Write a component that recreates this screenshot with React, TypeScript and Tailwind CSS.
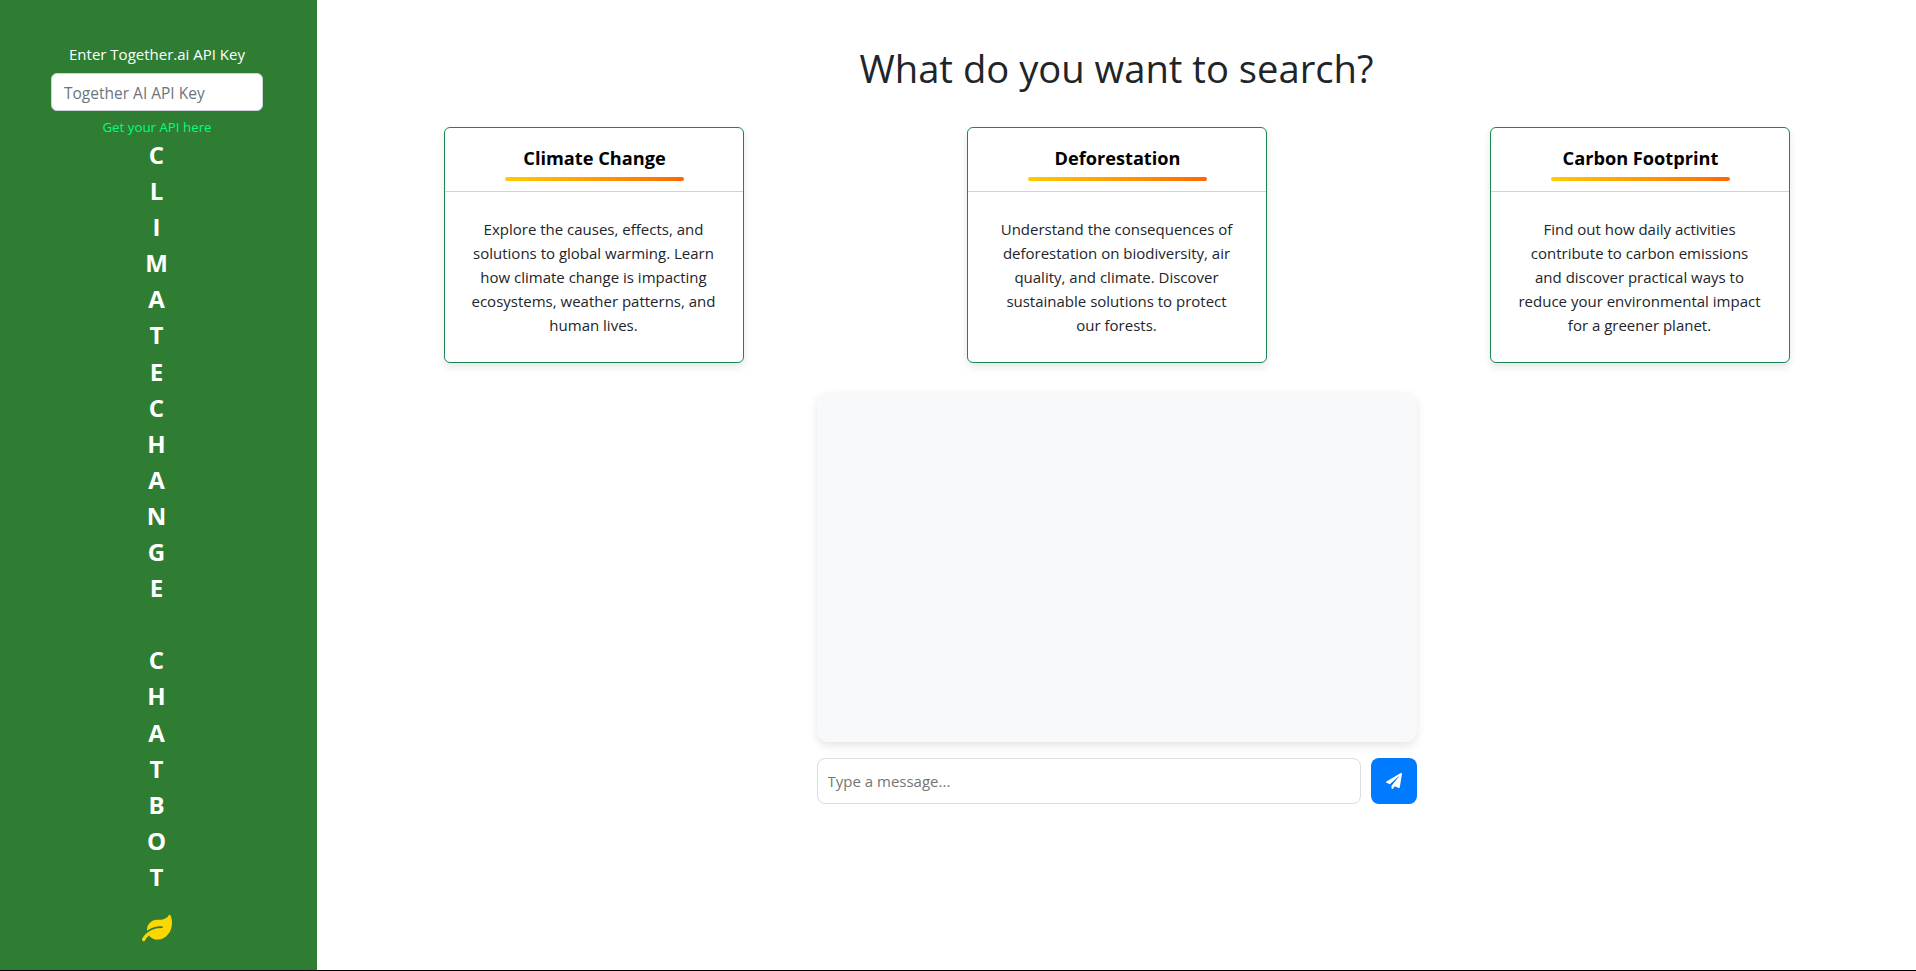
import { FaLeaf, FaPaperPlane } from 'react-icons/fa';

const sidebarTitle = 'CLIMATECHANGE CHATBOT'.split('');

const cards = [
  {
    title: 'Climate Change',
    text: 'Explore the causes, effects, and solutions to global warming. Learn how climate change is impacting ecosystems, weather patterns, and human lives.',
  },
  {
    title: 'Deforestation',
    text: 'Understand the consequences of deforestation on biodiversity, air quality, and climate. Discover sustainable solutions to protect our forests.',
  },
  {
    title: 'Carbon Footprint',
    text: 'Find out how daily activities contribute to carbon emissions and discover practical ways to reduce your environmental impact for a greener planet.',
  },
];

function Sidebar() {
  return (
    <aside className="flex w-[317px] shrink-0 flex-col items-center bg-[#2e7d32] pt-[43px] pr-[3px] text-white">
      <label className="shrink-0 text-[15px] leading-[22px]">Enter Together.ai API Key</label>
      <input
        type="text"
        placeholder="Together AI API Key"
        className="mt-[8px] h-[38px] w-[212px] shrink-0 rounded-[6px] border border-[#ced4da] bg-white px-[12px] pt-[1px] text-[15.5px] text-[#212529] placeholder:text-[#6c757d] focus:outline-none"
      />
      <a className="mt-[7px] shrink-0 text-[13.3px] leading-[18px] text-[#00ff7f]">Get your API here</a>
      <div className="mt-[1px] mr-[1px] flex shrink-0 flex-col items-center">
        {sidebarTitle.map((letter, i) => (
          <span key={i} className="h-[36.1px] text-[24px] leading-[36px] font-bold">
            {letter === ' ' ? '\u00a0' : letter}
          </span>
        ))}
      </div>
      <FaLeaf className="mt-[18.5px] h-[30px] w-[30px] shrink-0 text-[#ffd700]" />
    </aside>
  );
}

function TopicCard({ title, text }: { title: string; text: string }) {
  return (
    <div className="flex h-[236px] w-[300px] flex-col rounded-[6px] border border-[#198754] bg-white shadow-[0_4px_8px_rgba(0,0,0,0.1)]">
      <div className="flex h-[64px] flex-col items-center border-b border-[#d3d3d3] pt-[19px] pl-[2px]">
        <h3 className="text-[18.2px] leading-[22px] font-bold text-black">{title}</h3>
        <div className="mt-[8px] h-[4px] w-[179px] rounded-[2px] bg-gradient-to-r from-[#ffcc00] to-[#ff6600]" />
      </div>
      <p className="px-[27px] pt-[25px] text-center text-[15px] leading-[24px] text-[#212529]">{text}</p>
    </div>
  );
}

export default function App() {
  return (
    <div
      className="flex h-[971px] w-full overflow-hidden border-b border-black bg-white"
      style={{ fontFamily: '"Open Sans", "Noto Sans", sans-serif' }}
    >
      <Sidebar />
      <main className="flex flex-1 flex-col items-center pt-[42px]">
        <h1 className="text-[38.2px] leading-[52px] text-[#212529]">What do you want to search?</h1>
        <div className="mt-[33px] flex w-[1346px] justify-between">
          {cards.map((card) => (
            <TopicCard key={card.title} {...card} />
          ))}
        </div>
        <div className="mt-[29px] h-[350px] w-[600px] rounded-[12px] bg-[#f8f9fa] shadow-[0_4px_10px_rgba(0,0,0,0.1)]" />
        <div className="mt-[16px] flex w-[600px] gap-[10px]">
          <input
            type="text"
            placeholder="Type a message..."
            className="h-[46px] flex-1 rounded-[8px] border border-[#dddddd] bg-white px-[10px] pb-[1px] text-[15px] placeholder:text-[#757575] focus:outline-none"
          />
          <button className="flex h-[46px] w-[46px] items-center justify-center rounded-[8px] bg-[#007bff] text-white">
            <FaPaperPlane className="h-[16px] w-[16px]" />
          </button>
        </div>
      </main>
    </div>
  );
}
